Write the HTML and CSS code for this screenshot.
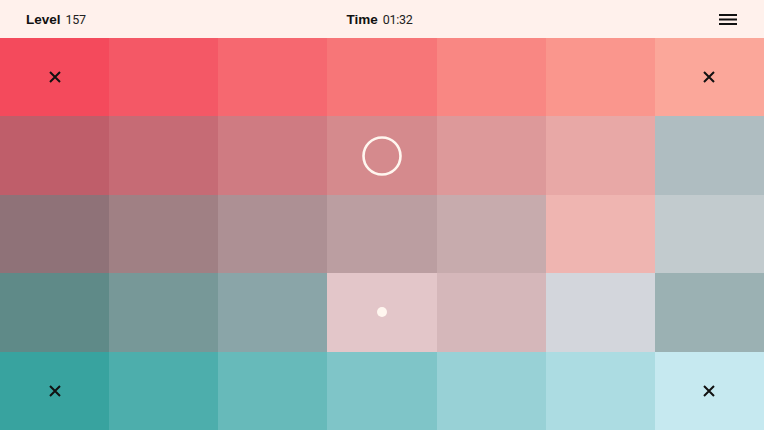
FILE: index.html
```html
<!DOCTYPE html>
<html>
<head>
<meta charset="utf-8">
<link rel="stylesheet" href="styles.css">
</head>
<body>
<header class="bar">
  <div class="stat left"><span class="label">Level</span><span class="num">157</span></div>
  <div class="stat center"><span class="label">Time</span><span class="num">01:32</span></div>
  <div class="right">
    <svg class="menu" width="18" height="11" viewBox="0 0 18 11"><rect x="0" y="0" width="18" height="2" fill="#111"/><rect x="0" y="4.5" width="18" height="2" fill="#111"/><rect x="0" y="9" width="18" height="2" fill="#111"/></svg>
  </div>
</header>
<main class="grid">
  <div class="cell c11"><svg class="x" width="14" height="14" viewBox="0 0 14 14"><path d="M2 2L12 12M12 2L2 12" stroke="#111" stroke-width="2" fill="none"/></svg></div>
  <div class="cell c12"></div>
  <div class="cell c13"></div>
  <div class="cell c14"></div>
  <div class="cell c15"></div>
  <div class="cell c16"></div>
  <div class="cell c17"><svg class="x" width="14" height="14" viewBox="0 0 14 14"><path d="M2 2L12 12M12 2L2 12" stroke="#111" stroke-width="2" fill="none"/></svg></div>

  <div class="cell c21"></div>
  <div class="cell c22"></div>
  <div class="cell c23"></div>
  <div class="cell c24"><svg width="42" height="42" viewBox="0 0 42 42"><circle cx="21" cy="21" r="18.5" stroke="#fff6ef" stroke-width="2.6" fill="none"/></svg></div>
  <div class="cell c25"></div>
  <div class="cell c26"></div>
  <div class="cell c27"></div>

  <div class="cell c31"></div>
  <div class="cell c32"></div>
  <div class="cell c33"></div>
  <div class="cell c34"></div>
  <div class="cell c35"></div>
  <div class="cell c36"></div>
  <div class="cell c37"></div>

  <div class="cell c41"></div>
  <div class="cell c42"></div>
  <div class="cell c43"></div>
  <div class="cell c44"><span class="dot"></span></div>
  <div class="cell c45"></div>
  <div class="cell c46"></div>
  <div class="cell c47"></div>

  <div class="cell c51"><svg class="x" width="14" height="14" viewBox="0 0 14 14"><path d="M2 2L12 12M12 2L2 12" stroke="#111" stroke-width="2" fill="none"/></svg></div>
  <div class="cell c52"></div>
  <div class="cell c53"></div>
  <div class="cell c54"></div>
  <div class="cell c55"></div>
  <div class="cell c56"></div>
  <div class="cell c57"><svg class="x" width="14" height="14" viewBox="0 0 14 14"><path d="M2 2L12 12M12 2L2 12" stroke="#111" stroke-width="2" fill="none"/></svg></div>
</main>
</body>
</html>
```
FILE: styles.css
```css
html, body {
  margin: 0;
  padding: 0;
  width: 764px;
  height: 430px;
  overflow: hidden;
  font-family: "Liberation Sans", Arial, sans-serif;
  color: #111;
}
.bar {
  height: 38px;
  background: #fff1ec;
  display: grid;
  grid-template-columns: 1fr auto 1fr;
  align-items: center;
  padding: 0 27px 0 26px;
  box-sizing: border-box;
}
.stat {
  display: flex;
  align-items: baseline;
  gap: 5px;
}
.center { transform: translateX(-2px); }
.label {
  font-weight: bold;
  font-size: 13.5px;
}
.num {
  font-family: Roboto, "Liberation Sans", sans-serif;
  font-size: 12.5px;
  letter-spacing: -0.3px;
  color: #222;
}
.right {
  display: flex;
  justify-content: flex-end;
}
.menu { display: block; }
.grid {
  display: grid;
  grid-template-columns: repeat(7, 1fr);
  grid-template-rows: repeat(5, 1fr);
  height: 392px;
}
.cell {
  display: flex;
  align-items: center;
  justify-content: center;
}
.x { display: block; }
.dot {
  width: 10px;
  height: 10px;
  border-radius: 50%;
  background: #fff6ef;
}
.c11 { background: #f44a5c; }
.c12 { background: #f45866; }
.c13 { background: #f66870; }
.c14 { background: #f77678; }
.c15 { background: #f98783; }
.c16 { background: #fa968d; }
.c17 { background: #fba79a; }
.c21 { background: #bf5e6a; }
.c22 { background: #c66b75; }
.c23 { background: #cf7b82; }
.c24 { background: #d58a8d; }
.c25 { background: #dd999a; }
.c26 { background: #e8a8a6; }
.c27 { background: #afbdc1; }
.c31 { background: #8f7278; }
.c32 { background: #a08084; }
.c33 { background: #ad9094; }
.c34 { background: #bb9ea1; }
.c35 { background: #c7abad; }
.c36 { background: #efb5b1; }
.c37 { background: #c2cbce; }
.c41 { background: #5f8a88; }
.c42 { background: #779898; }
.c43 { background: #8aa5a8; }
.c44 { background: #e3c6c9; }
.c45 { background: #d5b7ba; }
.c46 { background: #d3d6dc; }
.c47 { background: #9bb1b3; }
.c51 { background: #38a39f; }
.c52 { background: #4daeac; }
.c53 { background: #67baba; }
.c54 { background: #7fc5c8; }
.c55 { background: #98d1d6; }
.c56 { background: #acdce2; }
.c57 { background: #c6e9f0; }
```
